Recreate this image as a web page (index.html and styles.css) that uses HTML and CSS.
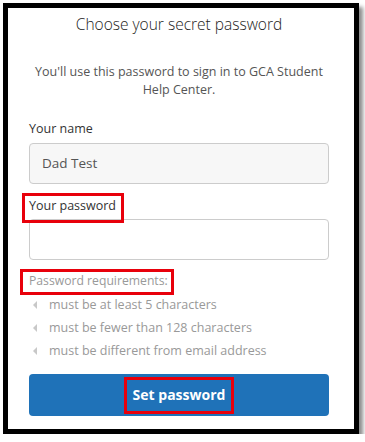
FILE: index.html
```html
<!DOCTYPE html>
<html lang="en">
<head>
    <meta charset="UTF-8">
    <meta name="viewport" content="width=device-width, initial-scale=1.0">
    <title>Choose your secret password</title>
    <link rel="stylesheet" href="styles.css">
</head>
<body>
    <div class="frame">
        <h1 class="title">Choose your secret password</h1>
        <p class="intro">You'll use this password to sign in to GCA Student Help Center.</p>

        <div class="field">
            <label class="field-label">Your name</label>
            <div class="input filled">Dad Test</div>
        </div>

        <div class="field field-password">
            <label class="field-label marked">Your password</label>
            <div class="input"></div>
        </div>

        <!-- requirements -->
        <div class="req-title marked">Password requirements:</div>
        <ul class="req-list">
            <li>must be at least 5 characters</li>
            <li>must be fewer than 128 characters</li>
            <li>must be different from email address</li>
        </ul>

        <button class="submit"><span class="marked">Set password</span></button>
    </div>
</body>
</html>
```

FILE: styles.css
```css
body {
    margin: 0;
    padding: 0;
    background: #fff;
    font-family: 'Open Sans', 'Noto Sans', sans-serif;
}

.frame {
    box-sizing: border-box;
    width: 356px;
    height: 431px;
    margin: 3px 0 0 3px;
    padding: 5px 25px 0 21px;
    border: 5px solid #000;
    background: #fff;
    box-shadow: 4px 4px 4px rgba(0, 0, 0, 0.45);
}

.title {
    margin: 0;
    font-size: 15.5px;
    font-weight: 300;
    line-height: 22px;
    color: #222;
    text-align: center;
}

.intro {
    margin: 28px 6px 0;
    font-size: 12.5px;
    line-height: 18px;
    color: #555;
    text-align: center;
}

.field {
    margin-top: 21px;
}

.field-password {
    margin-top: 13px;
}

.field-label {
    display: block;
    font-size: 12.5px;
    font-weight: 500;
    line-height: 18px;
    color: #333;
}

.input {
    box-sizing: border-box;
    height: 41px;
    margin-top: 5px;
    padding: 0 12px;
    border: 1px solid #ccc;
    border-radius: 4px;
    background: #fff;
    font-size: 13.5px;
    line-height: 39px;
    color: #555;
}

.input.filled {
    background: #f7f7f7;
}

.field-password .input {
    margin-top: 4px;
}

.marked {
    outline: 3px solid #e8000b;
}

.field-label.marked {
    width: fit-content;
    padding: 1px 5px 5px 4px;
    margin: -1px -5px -5px -4px;
    position: relative;
    z-index: 1;
}

.req-title {
    width: fit-content;
    margin-top: 12px;
    margin-left: -6px;
    padding: 0 3px 2px 6px;
    font-size: 12.2px;
    line-height: 18px;
    color: #999;
}

.req-list {
    list-style: none;
    margin: 1px 0 0;
    padding: 0;
}

.req-list li {
    position: relative;
    padding-left: 20px;
    font-size: 12.5px;
    line-height: 23px;
    color: #999;
}

.req-list li::before {
    content: '';
    position: absolute;
    left: 4px;
    top: 8px;
    border-top: 4px solid transparent;
    border-bottom: 4px solid transparent;
    border-right: 4px solid #c8c8c8;
}

.submit {
    display: block;
    width: 100%;
    height: 42px;
    margin-top: 12px;
    border: none;
    border-radius: 4px;
    background: #1f72b8;
    color: #fff;
    font-family: inherit;
    font-size: 14px;
    font-weight: 700;
}

.submit .marked {
    display: inline-block;
    padding: 5px 6px 6px;
    line-height: 20px;
}
```
